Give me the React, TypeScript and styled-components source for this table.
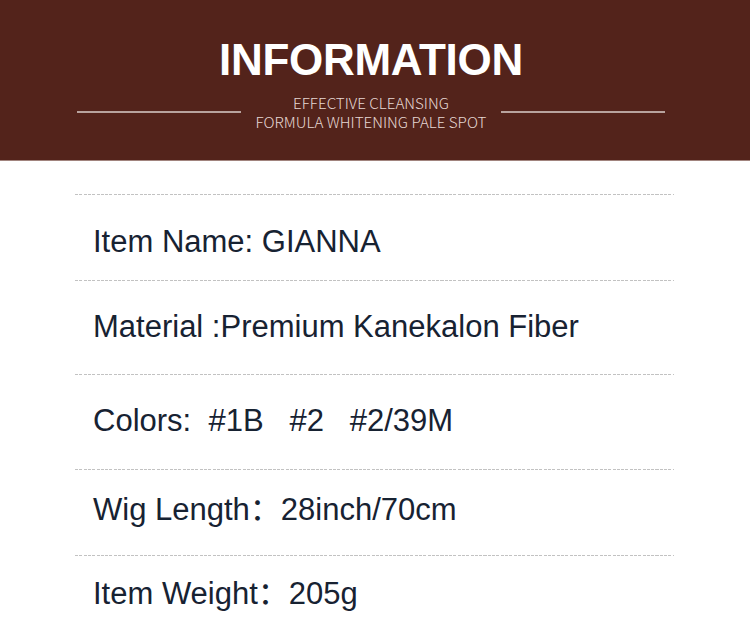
import React from "react";
import styled, { createGlobalStyle } from "styled-components";

const GlobalStyle = createGlobalStyle`
  html, body {
    margin: 0;
    padding: 0;
    background: #ffffff;
  }
  body {
    width: 750px;
    height: 632px;
    overflow: hidden;
    font-family: "Liberation Sans", "Noto Sans CJK SC", sans-serif;
  }
`;

const Page = styled.div`
  width: 750px;
  height: 632px;
  background: #ffffff;
  overflow: hidden;
`;

const Header = styled.header`
  box-sizing: border-box;
  height: 161px;
  background: #53231b;
  border-bottom: 1px solid #a1847e;
  padding: 38px 0 0 77px;
`;

const HeaderInner = styled.div`
  width: 588px;
  display: flex;
  flex-direction: column;
  align-items: center;
`;

const Title = styled.h1`
  margin: 0;
  font-family: "Liberation Sans", Arial, sans-serif;
  font-weight: 700;
  font-size: 44px;
  line-height: 44px;
  letter-spacing: -0.3px;
  color: #ffffff;
`;

const SubRow = styled.div`
  width: 100%;
  margin-top: 11px;
  display: flex;
  align-items: center;
  gap: 15px;
`;

const Rule = styled.span`
  flex: 1;
  height: 2px;
  background: #b8a39e;
`;

const Subtitle = styled.p`
  margin: 0;
  font-family: "Noto Sans CJK SC", "Liberation Sans", sans-serif;
  font-weight: 300;
  font-size: 15.2px;
  line-height: 19px;
  color: #e6d7d3;
  text-align: center;
  white-space: nowrap;
`;

const List = styled.section`
  margin: 33px 0 0 75px;
  width: 599px;
`;

const Row = styled.div<{ $h: number; $pad: number }>`
  box-sizing: border-box;
  height: ${(p) => p.$h}px;
  padding: ${(p) => p.$pad}px 0 0 18px;
  background-image: repeating-linear-gradient(
    to right,
    #c2c2c2 0,
    #c2c2c2 3px,
    transparent 3px,
    transparent 4.3px
  );
  background-size: 100% 1px;
  background-repeat: no-repeat;
  background-position: top left;
`;

const Text = styled.div`
  font-family: "Liberation Sans", "Noto Sans CJK SC", sans-serif;
  font-size: 31px;
  line-height: 36px;
  height: 36px;
  color: #172232;
  white-space: pre;
`;

const rows = [
  { text: "Item Name: GIANNA", h: 86, pad: 30 },
  { text: "Material :Premium Kanekalon Fiber", h: 94, pad: 29 },
  { text: "Colors:  #1B   #2   #2/39M", h: 95, pad: 29 },
  { text: "Wig Length\uFF1A28inch/70cm", h: 86, pad: 23 },
  { text: "Item Weight\uFF1A205g", h: 77, pad: 21 },
];

export default function App() {
  return (
    <Page>
      <GlobalStyle />
      <Header>
        <HeaderInner>
          <Title>INFORMATION</Title>
          <SubRow>
            <Rule />
            <Subtitle>
              EFFECTIVE CLEANSING
              <br />
              FORMULA WHITENING PALE SPOT
            </Subtitle>
            <Rule />
          </SubRow>
        </HeaderInner>
      </Header>
      <List>
        {rows.map((r) => (
          <Row key={r.text} $h={r.h} $pad={r.pad}>
            <Text>{r.text}</Text>
          </Row>
        ))}
      </List>
    </Page>
  );
}
